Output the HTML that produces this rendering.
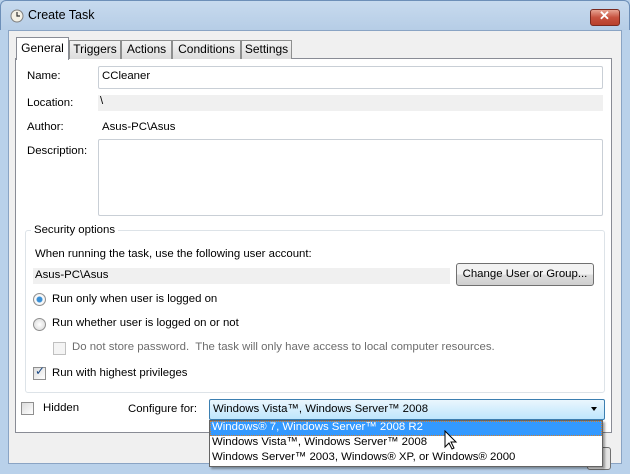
<!DOCTYPE html>
<html><head><meta charset="utf-8"><style>
*{margin:0;padding:0;box-sizing:border-box}
body{width:630px;height:474px;overflow:hidden;background:#b9d1ea;font:11.4px "Liberation Sans",sans-serif;color:#000;position:relative}
.a{position:absolute;white-space:nowrap}
#title{left:0;top:0;width:630px;height:30px;background:linear-gradient(#c7daee,#b6cde6);border:1px solid #6d8fb8;border-bottom:none;border-radius:6px 6px 0 0}
#client{left:8px;top:30px;width:614px;height:434px;background:#f0f0f0;border:1px solid #8aa4c4}
.tab{position:absolute;top:40px;height:19px;background:linear-gradient(#f3f3f3,#dcdcdc);border:1px solid #8e8f8f;border-bottom:none;text-align:center;line-height:17px;font-size:12px}
#panel{left:15px;top:58px;width:597px;height:375px;background:#fff;border:1px solid #898c95}
.tb{position:absolute;background:#fff;border:1px solid #c9cfd6;border-radius:2px}
.gray{position:absolute;background:#f0f0f0}
.cb{position:absolute;width:13px;height:13px;border:1px solid #8f8f8f;background:linear-gradient(135deg,#dcdcdc,#fff)}
.rd{position:absolute;width:13px;height:13px;border:1px solid #8f8f8f;border-radius:50%;background:radial-gradient(#fff,#d6d6d6)}
</style></head><body>
<div class="a" id="title"></div>
<svg class="a" style="left:10px;top:9px" width="14" height="14"><circle cx="7" cy="7" r="6" fill="#f4f1e6" stroke="#7f7f7f"/><path d="M7 3v4h3" stroke="#333" fill="none" stroke-width="1.2"/></svg>
<div class="a" style="left:28px;top:8px;font-size:12.5px">Create Task</div>
<div class="a" style="left:590px;top:9px;width:30px;height:17px;border:1px solid #7a2a20;border-radius:3px;background:linear-gradient(#e8a493,#c7523f 50%,#b8402c)"></div>
<div class="a" style="left:599px;top:8px;color:#fff;font-weight:bold;font-size:13px">✕</div>
<div class="a" id="client"></div>
<div class="a" id="panel"></div>
<div class="tab" style="left:16px;top:37px;width:53px;height:23px;background:#fff;border-color:#898c95;line-height:20px">General</div>
<div class="tab" style="left:69px;width:52px">Triggers</div>
<div class="tab" style="left:121px;width:51px">Actions</div>
<div class="tab" style="left:172px;width:69px">Conditions</div>
<div class="tab" style="left:241px;width:51px">Settings</div>

<div class="a" style="left:27px;top:70px">Name:</div>
<div class="tb" style="left:98px;top:66px;width:505px;height:23px"></div>
<div class="a" style="left:102px;top:70px">CCleaner</div>
<div class="a" style="left:27px;top:97px">Location:</div>
<div class="gray" style="left:98px;top:95px;width:505px;height:16px"></div>
<div class="a" style="left:100px;top:95px">\</div>
<div class="a" style="left:27px;top:121px">Author:</div>
<div class="a" style="left:102px;top:121px">Asus-PC\Asus</div>
<div class="a" style="left:27px;top:145px">Description:</div>
<div class="tb" style="left:98px;top:139px;width:505px;height:77px"></div>

<div class="a" style="left:25px;top:230px;width:580px;height:163px;border:1px solid #dde3e8;border-radius:3px"></div>
<div class="a" style="left:31px;top:224px;background:#fff;padding:0 3px">Security options</div>
<div class="a" style="left:35px;top:248px">When running the task, use the following user account:</div>
<div class="gray" style="left:33px;top:268px;width:417px;height:16px"></div>
<div class="a" style="left:35px;top:269px">Asus-PC\Asus</div>
<div class="a" style="left:456px;top:263px;width:138px;height:23px;border:1px solid #707070;border-radius:3px;background:linear-gradient(#f2f2f2 50%,#dddddd 50%,#cfcfcf);text-align:center;line-height:21px">Change User or Group...</div>
<div class="rd" style="left:33px;top:293px;background:radial-gradient(#3a8fd4 2.5px,#fff 3.5px,#d6d6d6)"></div>
<div class="a" style="left:52px;top:293px">Run only when user is logged on</div>
<div class="rd" style="left:33px;top:318px"></div>
<div class="a" style="left:52px;top:317px">Run whether user is logged on or not</div>
<div class="cb" style="left:53px;top:342px;border-color:#c0c0c0;background:#f4f4f4"></div>
<div class="a" style="left:72px;top:341px;color:#6d6d6d">Do not store password.&nbsp; The task will only have access to local computer resources.</div>
<div class="cb" style="left:33px;top:367px"></div>
<div class="a" style="left:35px;top:364px;color:#1b4a86;font-size:12px">✓</div>
<div class="a" style="left:52px;top:367px">Run with highest privileges</div>

<div class="cb" style="left:21px;top:402px"></div>
<div class="a" style="left:43px;top:402px">Hidden</div>
<div class="a" style="left:128px;top:403px">Configure for:</div>
<div class="a" style="left:209px;top:399px;width:396px;height:21px;border:1px solid #3c7fb1;border-radius:2px;background:linear-gradient(#eaf6fd,#bee6fd)"></div>
<div class="a" style="left:213px;top:403px">Windows Vista™, Windows Server™ 2008</div>
<div class="a" style="left:591px;top:407px;width:0;height:0;border-left:3.5px solid transparent;border-right:3.5px solid transparent;border-top:4px solid #000"></div>

<div class="a" style="left:587px;top:447px;width:24px;height:23px;border:1px solid #707070;border-radius:3px;background:#e5e5e5"></div>
<div class="a" style="left:209px;top:420px;width:394px;height:47px;background:#fff;border:1px solid #646464;box-shadow:2px 2px 2px rgba(0,0,0,.35)"></div>
<div class="a" style="left:210px;top:421px;width:392px;height:15px;background:#3399ff;border:1px dotted #d08030"></div>
<div class="a" style="left:212px;top:421px;color:#fff">Windows® 7, Windows Server™ 2008 R2</div>
<div class="a" style="left:212px;top:436px">Windows Vista™, Windows Server™ 2008</div>
<div class="a" style="left:212px;top:451px">Windows Server™ 2003, Windows® XP, or Windows® 2000</div>
<svg class="a" style="left:444px;top:430px" width="14" height="22"><path d="M1 1v16l4-4 3 6 2-1-3-6h5z" fill="#fff" stroke="#000"/></svg>
</body></html>
